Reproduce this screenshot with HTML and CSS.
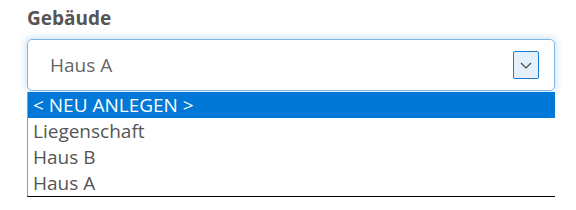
FILE: index.html
```html
<!DOCTYPE html>
<html lang="de">

<head>
    <meta charset="UTF-8" />
    <meta name="viewport" content="width=device-width, initial-scale=1.0" />
    <title>Gebäude</title>
    <link rel="stylesheet" href="styles.css">
</head>

<body>
    <div class="field">
        <label class="field-label">Gebäude</label>
        <div class="select">
            <span class="select-value">Haus A</span>
            <span class="select-toggle">
                <svg width="12" height="7" viewBox="0 0 12 7">
                    <polyline points="1,1 6,6 11,1" fill="none" stroke="#444" stroke-width="1.1" />
                </svg>
            </span>
        </div>
        <ul class="options">
            <li class="option selected">&lt; NEU ANLEGEN &gt;</li>
            <li class="option">Liegenschaft</li>
            <li class="option">Haus B</li>
            <li class="option">Haus A</li>
        </ul>
    </div>
</body>

</html>
```

FILE: styles.css
```css
* {
    box-sizing: border-box;
    margin: 0;
    padding: 0;
}

body {
    font-family: 'Open Sans', sans-serif;
    background: #fff;
    color: #555;
}

.field {
    padding: 5px 0 0 27px;
    width: 555px;
}

.field-label {
    display: block;
    font-size: 19px;
    font-weight: 700;
    line-height: 26px;
    color: #555;
    margin-bottom: 8px;
}

.select {
    display: flex;
    align-items: center;
    justify-content: space-between;
    height: 52px;
    padding: 0 15px 0 22px;
    border: 1px solid #80b5e5;
    border-radius: 5px;
    box-shadow: 0 0 7px 2px rgba(0, 120, 215, 0.18);
}

.select-value {
    font-size: 19px;
    color: #666;
}

.select-toggle {
    display: flex;
    align-items: center;
    justify-content: center;
    width: 26px;
    height: 28px;
    border: 1px solid #1b7bd1;
    border-radius: 2px;
    background-color: #e4f0fb;
}

.options {
    list-style: none;
    margin-top: 1px;
    width: 528px;
    border-left: 1px solid #9a9a9a;
    border-bottom: 1px solid #000;
    background: #fff;
}

.option {
    font-size: 19px;
    line-height: 26px;
    padding-left: 5px;
    color: #555;
}

.option.selected {
    background-color: #0078d7;
    color: #fff;
}
```
